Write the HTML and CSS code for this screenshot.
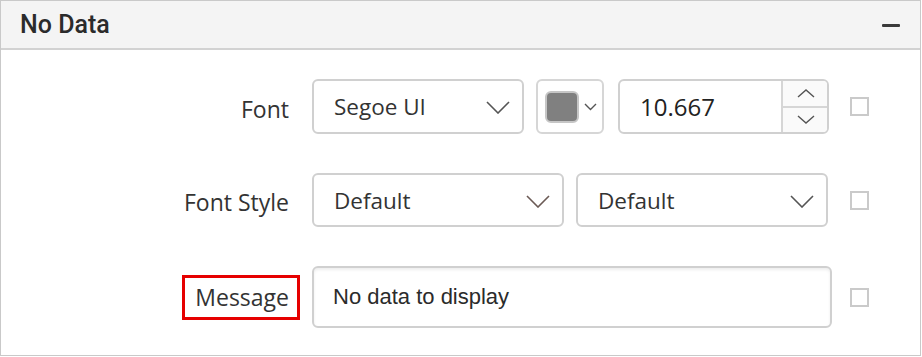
FILE: index.html
```html
<!DOCTYPE html>
<html>
<head>
<meta charset="utf-8">
<link rel="stylesheet" href="styles.css">
</head>
<body>
<div class="panel">
  <div class="header">
    <span class="title">No Data</span>
    <span class="collapse"></span>
  </div>
  <div class="body">
    <div class="row row1">
      <div class="label">Font</div>
      <div class="controls">
        <div class="dropdown dd-font">
          <span class="value">Segoe UI</span>
          <svg class="chev" width="24" height="13" viewBox="0 0 24 13"><path d="M1 1 L12 12 L23 1" fill="none" stroke="#555" stroke-width="1.6"/></svg>
        </div>
        <div class="colorpick">
          <span class="swatch"></span>
          <svg class="chev-sm" width="13" height="8" viewBox="0 0 13 8"><path d="M1 1 L6.5 6.5 L12 1" fill="none" stroke="#555" stroke-width="1.4"/></svg>
        </div>
        <div class="numeric">
          <span class="num-value">10.667</span>
          <div class="spin">
            <div class="spin-btn">
              <svg width="18" height="9" viewBox="0 0 18 9"><path d="M1 8 L9 1 L17 8" fill="none" stroke="#555" stroke-width="1.4"/></svg>
            </div>
            <div class="spin-btn spin-down">
              <svg width="18" height="9" viewBox="0 0 18 9"><path d="M1 1 L9 8 L17 1" fill="none" stroke="#555" stroke-width="1.4"/></svg>
            </div>
          </div>
        </div>
      </div>
      <span class="checkbox"></span>
    </div>
    <div class="row row2">
      <div class="label">Font Style</div>
      <div class="controls">
        <div class="dropdown dd-half">
          <span class="value">Default</span>
          <svg class="chev" width="24" height="13" viewBox="0 0 24 13"><path d="M1 1 L12 12 L23 1" fill="none" stroke="#6b5a55" stroke-width="1.6"/></svg>
        </div>
        <div class="dropdown dd-half">
          <span class="value">Default</span>
          <svg class="chev" width="24" height="13" viewBox="0 0 24 13"><path d="M1 1 L12 12 L23 1" fill="none" stroke="#555" stroke-width="1.6"/></svg>
        </div>
      </div>
      <span class="checkbox"></span>
    </div>
    <div class="row row3">
      <div class="label"><span class="highlight">Message</span></div>
      <div class="controls">
        <div class="textinput">No data to display</div>
      </div>
      <span class="checkbox"></span>
    </div>
  </div>
</div>
</body>
</html>
```

FILE: styles.css
```css
* { box-sizing: border-box; }
body {
  margin: 0;
  background: #ffffff;
  font-family: "Open Sans", "Noto Sans", sans-serif;
  color: #333333;
}
.panel {
  width: 921px;
  height: 356px;
  border: 1px solid #c9c9c9;
  background: #ffffff;
}
.header {
  height: 49px;
  background: #f4f4f4;
  border-bottom: 2px solid #d2d2d2;
  display: flex;
  align-items: center;
  justify-content: space-between;
  padding: 0 20px 0 19px;
}
.title {
  font-family: Roboto, "Liberation Sans", sans-serif;
  font-weight: 500;
  font-size: 25px;
  color: #2b2b2b;
}
.collapse {
  display: block;
  width: 18px;
  height: 3px;
  background: #3a3a3a;
  border-radius: 1px;
  margin-top: 1px;
}
.body {
  padding-top: 29px;
  display: flex;
  flex-direction: column;
  gap: 39px;
}
.row {
  display: grid;
  grid-template-columns: 288px 520px 19px;
  column-gap: 23px;
  align-items: center;
}
.row .checkbox { margin-left: -5px; }
.row1 { height: 55px; }
.row2 { height: 54px; }
.row3 { height: 62px; }
.label {
  text-align: right;
  font-size: 23px;
  color: #333;
  white-space: nowrap;
}
.row1 .label { padding-top: 4px; }
.row2 .label { padding-top: 3px; }
.controls {
  display: flex;
  height: 100%;
}
.dropdown {
  border: 2px solid #d0d0d0;
  border-radius: 6px;
  height: 100%;
  display: flex;
  align-items: center;
  justify-content: space-between;
  padding: 0 12px 0 20px;
  background: #fff;
}
.value {
  font-size: 22.5px;
  color: #333;
}
.dd-font { width: 212px; }
.dd-font .value { margin-top: -1px; }
.dd-half { width: 252px; }
.dd-half + .dd-half { margin-left: 12px; }
.chev { display: block; margin-top: 2px; }
.colorpick {
  width: 68px;
  margin-left: 12px;
  border: 2px solid #d6d6d6;
  border-radius: 6px;
  display: flex;
  align-items: center;
  padding-left: 7px;
}
.swatch {
  display: block;
  width: 34px;
  height: 32px;
  background: #808080;
  border: 2px solid #c6c6c6;
  border-radius: 6px;
}
.chev-sm { display: block; margin-left: 5px; margin-top: 1px; }
.numeric {
  width: 211px;
  margin-left: 14px;
  border: 2px solid #d0d0d0;
  border-radius: 6px;
  display: flex;
  overflow: hidden;
}
.num-value {
  flex: 1;
  display: flex;
  align-items: center;
  padding-left: 20px;
  font-size: 24px;
  color: #222;
}
.spin {
  width: 46px;
  border-left: 2px solid #d6d6d6;
  display: flex;
  flex-direction: column;
  background: #fafafa;
}
.spin-btn {
  flex: 1;
  display: flex;
  align-items: center;
  justify-content: center;
  padding-left: 2px;
}
.spin-btn svg { display: block; }
.spin-down {
  border-top: 2px solid #d6d6d6;
}
.textinput {
  width: 520px;
  height: 100%;
  border: 2px solid #d0d0d0;
  border-radius: 6px;
  box-shadow: inset 0 2px 3px rgba(0, 0, 0, 0.07);
  display: flex;
  align-items: center;
  padding-left: 19px;
  font-family: "Liberation Sans", Arial, sans-serif;
  font-size: 22px;
  color: #2b2b2b;
}
.checkbox {
  display: block;
  width: 19px;
  height: 19px;
  border: 2px solid #cacaca;
  background: #fff;
}
.highlight {
  display: inline-block;
  border: 3px solid #e60000;
  padding: 3px 8px 3px 10px;
  margin-right: -11px;
  line-height: 33px;
}
```
